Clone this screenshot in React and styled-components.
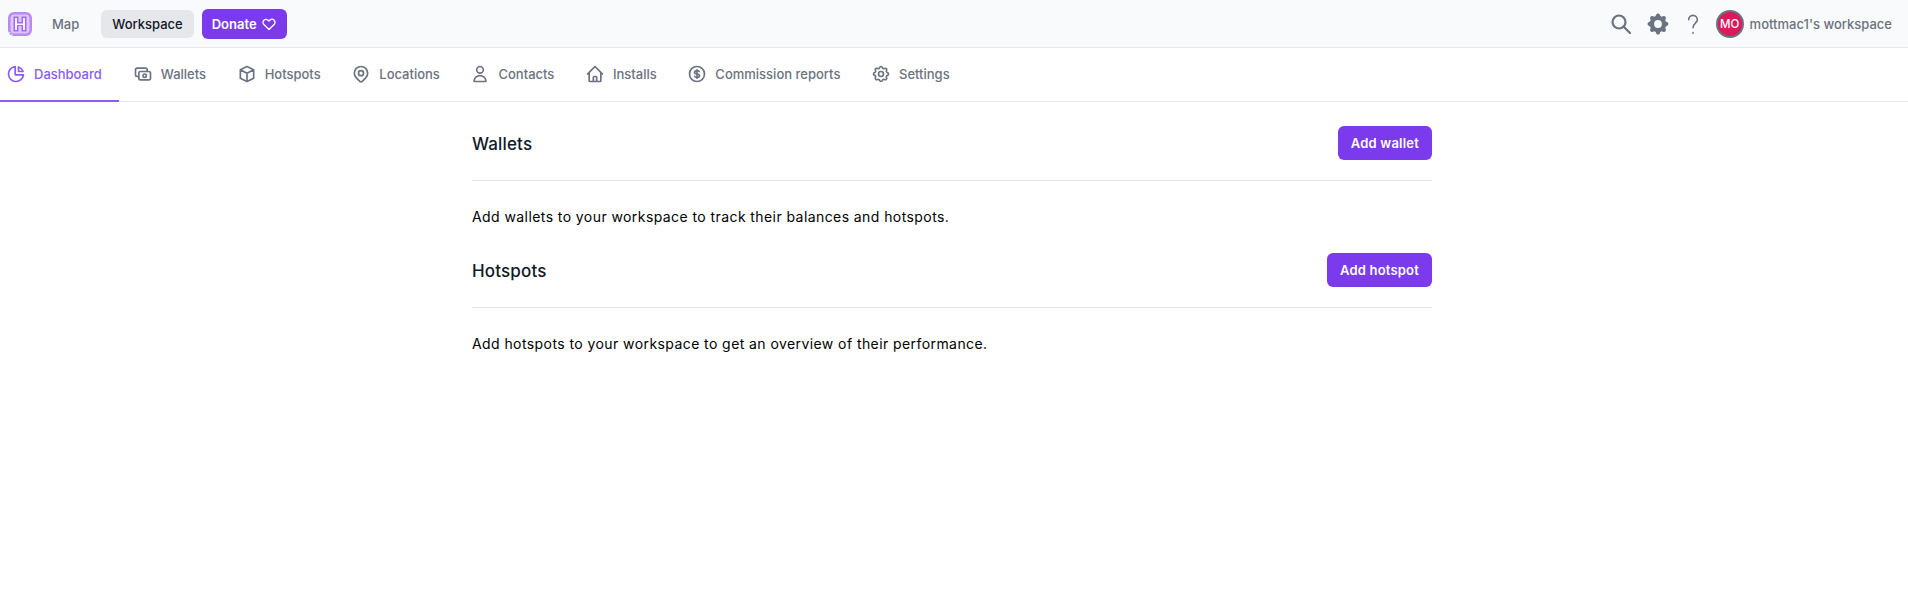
import React from 'react'
import styled, { createGlobalStyle } from 'styled-components'

const GlobalStyle = createGlobalStyle`
    * { box-sizing: border-box; }
    html, body { margin: 0; background: #fff; }
    body { font-family: Inter, "Noto Sans", sans-serif; color: #111827; }
`
const TopBar = styled.header`
    height: 48px;
    background: #f9fafb;
    border-bottom: 1px solid #e5e7eb;
    display: flex;
    align-items: center;
    justify-content: space-between;
    padding: 0 16px 0 8px;
`
const TopGroup = styled.div`
    display: flex;
    align-items: center;
`
const Logo = styled.svg`
    width: 24px;
    height: 24px;
    margin-right: 8px;
`
const TopLink = styled.a`
    height: 28px;
    padding: 0 ${({ $active }) => ($active ? 11 : 12)}px;
    margin-right: ${({ $active }) => ($active ? 8 : 10)}px;
    display: flex;
    align-items: center;
    border-radius: 6px;
    font-size: 13px;
    font-weight: 500;
    color: ${({ $active }) => ($active ? '#111827' : '#6b7280')};
    background: ${({ $active }) => ($active ? '#e5e7eb' : 'transparent')};
`
const DonateButton = styled.a`
    height: 30px;
    padding: 0 10px;
    display: flex;
    align-items: center;
    gap: 4px;
    border-radius: 6px;
    background: #7c3aed;
    color: #fff;
    font-size: 13px;
    font-weight: 600;
    svg { width: 16px; height: 16px; }
`
const IconButton = styled.span`
    display: flex;
    color: #6b7280;
    margin-right: ${({ $gap }) => $gap}px;
    svg { width: ${({ $size }) => $size}px; height: ${({ $size }) => $size}px; }
`
const Avatar = styled.span`
    width: 28px;
    height: 28px;
    border-radius: 50%;
    background: #db1a5b;
    border: 2px solid #6b7280;
    color: #fff;
    font-size: 11.5px;
    font-weight: 500;
    display: flex;
    align-items: center;
    justify-content: center;
    margin-right: 6px;
`
const WorkspaceName = styled.span`
    font-size: 13px;
    font-weight: 500;
    color: #6b7280;
`
const TabBar = styled.nav`
    height: 54px;
    border-bottom: 1px solid #e5e7eb;
    display: flex;
`
const Tab = styled.a`
    height: 54px;
    display: flex;
    align-items: center;
    gap: 8px;
    padding: 0 ${({ $first }) => ($first ? 17 : 16.6)}px 0 ${({ $first }) => ($first ? 6 : 14)}px;
    font-size: 13px;
    font-weight: 500;
    color: ${({ $active }) => ($active ? '#8b5cf6' : '#6b7280')};
    border-bottom: 2px solid ${({ $active }) => ($active ? '#8b5cf6' : 'transparent')};
    svg { width: 20px; height: 20px; }
`
const Page = styled.div`
    padding-right: 4px;
`
const Content = styled.main`
    width: 960px;
    margin: 0 auto;
`
const SectionHeader = styled.div`
    height: 79px;
    padding-top: 24px;
    border-bottom: 1px solid #e5e7eb;
    display: flex;
    justify-content: space-between;
    align-items: flex-start;
`
const SectionTitle = styled.h2`
    margin: 0;
    height: 34px;
    padding-top: 1px;
    display: flex;
    align-items: center;
    font-size: 17px;
    font-weight: 500;
    letter-spacing: 0.15px;
    color: #111827;
`
const PrimaryButton = styled.button`
    height: 34px;
    padding: 0 13px;
    border: 0;
    border-radius: 6px;
    background: #7c3aed;
    color: #fff;
    font-family: inherit;
    font-size: 13px;
    font-weight: 600;
    letter-spacing: 0.2px;
`
const SectionText = styled.p`
    margin: 0;
    padding-top: 26px;
    height: 48px;
    font-size: 14px;
    line-height: 20px;
    letter-spacing: 0.42px;
    color: #000;
`
const Outline = ({ children }) => (
    <svg viewBox="0 0 24 24" fill="none" stroke="currentColor" strokeWidth="2" strokeLinecap="round" strokeLinejoin="round">
        {children}
    </svg>
)

const tabs = [
    { label: 'Dashboard', active: true, icon: <><path d="M11 3.055A9.001 9.001 0 1020.945 13H11V3.055z" /><path d="M20.488 9H15V3.512A9.025 9.025 0 0120.488 9z" /></> },
    { label: 'Wallets', icon: <path d="M17 9V7a2 2 0 00-2-2H5a2 2 0 00-2 2v6a2 2 0 002 2h2m2 4h10a2 2 0 002-2v-6a2 2 0 00-2-2H9a2 2 0 00-2 2v6a2 2 0 002 2zm7-5a2 2 0 11-4 0 2 2 0 014 0z" /> },
    { label: 'Hotspots', icon: <path d="M20 7l-8-4-8 4m16 0l-8 4m8-4v10l-8 4m0-10L4 7m8 4v10M4 7v10l8 4" /> },
    { label: 'Locations', icon: <><path d="M17.657 16.657L13.414 20.9a1.998 1.998 0 01-2.827 0l-4.244-4.243a8 8 0 1111.314 0z" /><path d="M15 11a3 3 0 11-6 0 3 3 0 016 0z" /></> },
    { label: 'Contacts', icon: <><circle cx="12" cy="7" r="4" /><path d="M5 21v-1a7 6 0 0114 0v1z" /></> },
    { label: 'Installs', icon: <path d="M3 12l2-2m0 0l7-7 7 7M5 10v10a1 1 0 001 1h3m10-11l2 2m-2-2v10a1 1 0 01-1 1h-3m-6 0a1 1 0 001-1v-4a1 1 0 011-1h2a1 1 0 011 1v4a1 1 0 001 1m-6 0h6" /> },
    { label: 'Commission reports', icon: <path d="M12 8c-1.657 0-3 .895-3 2s1.343 2 3 2 3 .895 3 2-1.343 2-3 2m0-8c1.11 0 2.08.402 2.599 1M12 8V7m0 1v8m0 0v1m0-1c-1.11 0-2.08-.402-2.599-1M21 12a9 9 0 11-18 0 9 9 0 0118 0z" /> },
    { label: 'Settings', icon: <><path d="M10.325 4.317c.426-1.756 2.924-1.756 3.35 0a1.724 1.724 0 002.573 1.066c1.543-.94 3.31.826 2.37 2.37a1.724 1.724 0 001.065 2.572c1.756.426 1.756 2.924 0 3.35a1.724 1.724 0 00-1.066 2.573c.94 1.543-.826 3.31-2.37 2.37a1.724 1.724 0 00-2.572 1.065c-.426 1.756-2.924 1.756-3.35 0a1.724 1.724 0 00-2.573-1.066c-1.543.94-3.31-.826-2.37-2.37a1.724 1.724 0 00-1.065-2.572c-1.756-.426-1.756-2.924 0-3.35a1.724 1.724 0 001.066-2.573c-.94-1.543.826-3.31 2.37-2.37.996.608 2.296.07 2.572-1.065z" /><path d="M15 12a3 3 0 11-6 0 3 3 0 016 0z" /></> },
]

const sections = [
    { title: 'Wallets', action: 'Add wallet', text: 'Add wallets to your workspace to track their balances and hotspots.' },
    { title: 'Hotspots', action: 'Add hotspot', text: 'Add hotspots to your workspace to get an overview of their performance.' },
]

export default function App() {
    return (
        <>
            <GlobalStyle />
            <TopBar>
                <TopGroup>
                    <Logo viewBox="0 0 24 24">
                        <rect width="24" height="24" rx="6" fill="#b98af6" />
                        <rect x="2.5" y="2.5" width="19" height="19" rx="4" fill="#dcc6fb" />
                        <path d="M5.5 4.5h5V10h3V4.5h5v15h-5V14h-3v5.5h-5z" fill="#a56af2" />
                        <path d="M7 6h2v5.5h6V6h2v12h-2v-5H9v5H7z" fill="#f8f2ff" />
                        <path d="M1 20h1.4v1.4H1zM3 22h1.4v1.4H3z" fill="#e9dcfd" />
                    </Logo>
                    <TopLink>Map</TopLink>
                    <TopLink $active>Workspace</TopLink>
                    <DonateButton>
                        Donate
                        <Outline><path d="M4.318 6.318a4.5 4.5 0 000 6.364L12 20.364l7.682-7.682a4.5 4.5 0 00-6.364-6.364L12 7.636l-1.318-1.318a4.5 4.5 0 00-6.364 0z" /></Outline>
                    </DonateButton>
                </TopGroup>
                <TopGroup>
                    <IconButton $size={24} $gap={12}>
                        <svg viewBox="0 0 24 24" fill="none" stroke="currentColor" strokeWidth="2.2" strokeLinecap="round"><circle cx="10" cy="10" r="6.5" /><path d="M15 15l6 6" /></svg>
                    </IconButton>
                    <IconButton $size={26} $gap={9}>
                        <svg viewBox="0 0 20 20" fill="currentColor"><path fillRule="evenodd" clipRule="evenodd" d="M11.49 3.17c-.38-1.56-2.6-1.56-2.98 0a1.532 1.532 0 01-2.286.948c-1.372-.836-2.942.734-2.106 2.106.54.886.061 2.042-.947 2.287-1.561.379-1.561 2.6 0 2.978a1.532 1.532 0 01.947 2.287c-.836 1.372.734 2.942 2.106 2.106a1.532 1.532 0 012.287.947c.379 1.561 2.6 1.561 2.978 0a1.533 1.533 0 012.287-.947c1.372.836 2.942-.734 2.106-2.106a1.533 1.533 0 01.947-2.287c1.561-.379 1.561-2.6 0-2.978a1.532 1.532 0 01-.947-2.287c.836-1.372-.734-2.942-2.106-2.106a1.532 1.532 0 01-2.287-.947zM10 13a3 3 0 100-6 3 3 0 000 6z" /></svg>
                    </IconButton>
                    <IconButton $size={26} $gap={10}>
                        <svg viewBox="0 0 24 24" fill="none" stroke="currentColor" strokeWidth="1.5" strokeLinecap="round"><path d="M8 8a4 4 0 018 0c0 3-4 3.5-4 7.5" /><path d="M12 20v.5" /></svg>
                    </IconButton>
                    <Avatar>MO</Avatar>
                    <WorkspaceName>mottmac1's workspace</WorkspaceName>
                </TopGroup>
            </TopBar>
            <TabBar>
                {tabs.map((tab, i) => (
                    <Tab key={tab.label} $active={tab.active} $first={i === 0}>
                        <Outline>{tab.icon}</Outline>
                        {tab.label}
                    </Tab>
                ))}
            </TabBar>
            <Page>
                <Content>
                    {sections.map((section) => (
                        <section key={section.title}>
                            <SectionHeader>
                                <SectionTitle>{section.title}</SectionTitle>
                                <PrimaryButton>{section.action}</PrimaryButton>
                            </SectionHeader>
                            <SectionText>{section.text}</SectionText>
                        </section>
                    ))}
                </Content>
            </Page>
        </>
    )
}
